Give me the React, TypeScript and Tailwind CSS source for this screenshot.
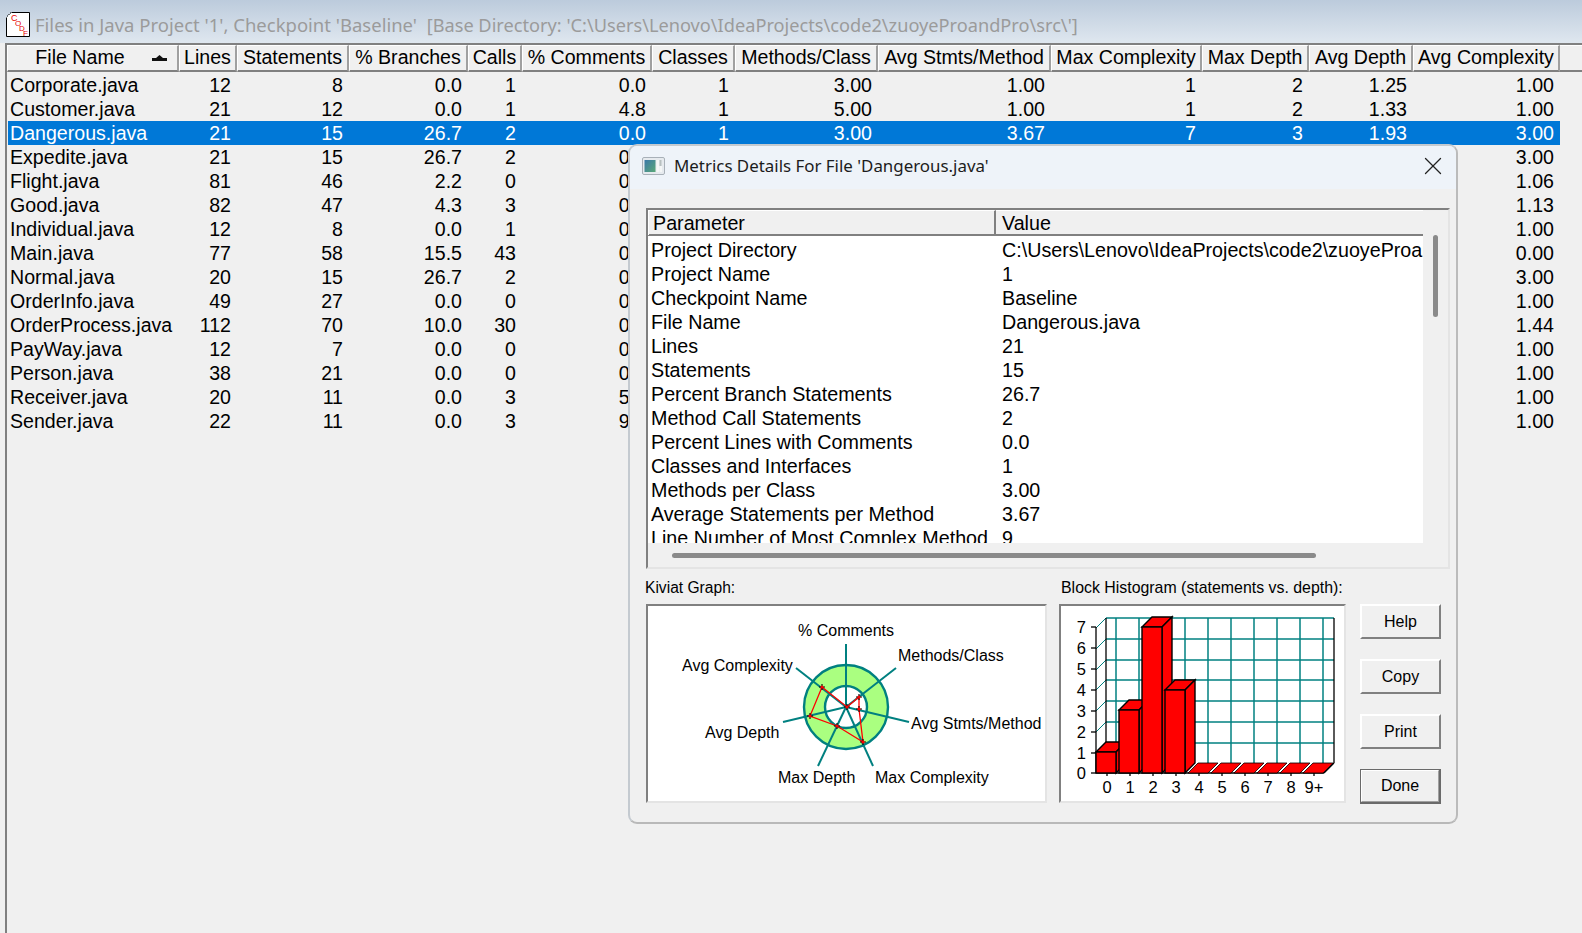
import { X } from "lucide-react";

const columns = [
  "Lines",
  "Statements",
  "% Branches",
  "Calls",
  "% Comments",
  "Classes",
  "Methods/Class",
  "Avg Stmts/Method",
  "Max Complexity",
  "Max Depth",
  "Avg Depth",
  "Avg Complexity",
];

const headerCols =
  "grid grid-cols-[172px_58px_112px_119px_54px_130px_83px_143px_173px_151px_107px_104px_147px]";
const rowCols =
  "grid grid-cols-[171px_58px_112px_119px_54px_130px_83px_143px_173px_151px_107px_104px_147px]";

// cells behind the dialog can't be read in the picture, so they stay empty
const files = [
  ["Corporate.java", "12", "8", "0.0", "1", "0.0", "1", "3.00", "1.00", "1", "2", "1.25", "1.00"],
  ["Customer.java", "21", "12", "0.0", "1", "4.8", "1", "5.00", "1.00", "1", "2", "1.33", "1.00"],
  ["Dangerous.java", "21", "15", "26.7", "2", "0.0", "1", "3.00", "3.67", "7", "3", "1.93", "3.00"],
  ["Expedite.java", "21", "15", "26.7", "2", "0.0", "", "", "", "", "", "", "3.00"],
  ["Flight.java", "81", "46", "2.2", "0", "0.0", "", "", "", "", "", "", "1.06"],
  ["Good.java", "82", "47", "4.3", "3", "0.0", "", "", "", "", "", "", "1.13"],
  ["Individual.java", "12", "8", "0.0", "1", "0.0", "", "", "", "", "", "", "1.00"],
  ["Main.java", "77", "58", "15.5", "43", "0.0", "", "", "", "", "", "", "0.00"],
  ["Normal.java", "20", "15", "26.7", "2", "0.0", "", "", "", "", "", "", "3.00"],
  ["OrderInfo.java", "49", "27", "0.0", "0", "0.0", "", "", "", "", "", "", "1.00"],
  ["OrderProcess.java", "112", "70", "10.0", "30", "0.0", "", "", "", "", "", "", "1.44"],
  ["PayWay.java", "12", "7", "0.0", "0", "0.0", "", "", "", "", "", "", "1.00"],
  ["Person.java", "38", "21", "0.0", "0", "0.0", "", "", "", "", "", "", "1.00"],
  ["Receiver.java", "20", "11", "0.0", "3", "5.0", "", "", "", "", "", "", "1.00"],
  ["Sender.java", "22", "11", "0.0", "3", "9.1", "", "", "", "", "", "", "1.00"],
];

const metrics = [
  ["Project Directory", "C:\\Users\\Lenovo\\IdeaProjects\\code2\\zuoyeProandPro\\src\\"],
  ["Project Name", "1"],
  ["Checkpoint Name", "Baseline"],
  ["File Name", "Dangerous.java"],
  ["Lines", "21"],
  ["Statements", "15"],
  ["Percent Branch Statements", "26.7"],
  ["Method Call Statements", "2"],
  ["Percent Lines with Comments", "0.0"],
  ["Classes and Interfaces", "1"],
  ["Methods per Class", "3.00"],
  ["Average Statements per Method", "3.67"],
  ["Line Number of Most Complex Method", "9"],
];

const headerCell =
  "h-[27px] flex items-center justify-center border-t border-l border-t-white border-l-white border-r-2 border-b-2 border-r-[#a0a0a0] border-b-[#808080] whitespace-nowrap overflow-hidden";

const raised =
  "w-[81px] h-[35px] flex items-center justify-center bg-[#f0f0f0] border-t-2 border-l-2 border-t-white border-l-white border-r-2 border-b-2 border-r-[#808080] border-b-[#808080] text-[16px] text-black";

const sunken =
  "border-t-2 border-l-2 border-t-[#808080] border-l-[#808080] border-r-2 border-b-2 border-r-[#e4e4e4] border-b-[#e4e4e4] bg-white";

const spokes = [
  [846, 644],
  [896, 668],
  [909, 722],
  [873, 766],
  [818, 766],
  [783, 722],
  [796, 668],
];

const kiviatPoints = [
  [847, 707],
  [859, 697],
  [859, 709],
  [863, 742],
  [837, 726],
  [810, 716],
  [822, 687],
];

const kiviatLabels: [string, number, number][] = [
  ["% Comments", 798, 636],
  ["Methods/Class", 898, 661],
  ["Avg Complexity", 682, 671],
  ["Avg Depth", 705, 738],
  ["Avg Stmts/Method", 911, 729],
  ["Max Depth", 778, 783],
  ["Max Complexity", 875, 783],
];

function KiviatGraph() {
  return (
    <svg width="397" height="195" viewBox="648 606 397 195">
      <circle cx="846" cy="707" r="42" fill="#aaff80" stroke="#008080" strokeWidth="2.4" />
      <circle cx="846" cy="707" r="21" fill="#ffffff" stroke="#008080" strokeWidth="2.4" />
      {spokes.map(([x, y]) => (
        <line key={x} x1="846" y1="707" x2={x} y2={y} stroke="#008080" strokeWidth="2" />
      ))}
      <polygon
        points={kiviatPoints.map((p) => p.join(",")).join(" ")}
        fill="none"
        stroke="#ff0000"
        strokeWidth="1.3"
      />
      {kiviatPoints.map(([x, y]) => (
        <g key={x + "-" + y}>
          <path d={`M${x - 3} ${y}h6M${x} ${y - 3}v6`} stroke="#000000" strokeWidth="1.1" />
          <circle cx={x} cy={y} r="1.6" fill="#ff0000" />
        </g>
      ))}
      {kiviatLabels.map(([label, x, y]) => (
        <text key={label} x={x} y={y} fontSize="16" fill="#000000">
          {label}
        </text>
      ))}
    </svg>
  );
}

const gridRows = [618, 639, 660, 680, 701, 722, 743];
const gridVerticals = [1116, 1139, 1162, 1185, 1208, 1231, 1254, 1277, 1300, 1323];
const yTicks = [773, 753, 732, 711, 690, 669, 648, 627];
const xLabels = ["0", "1", "2", "3", "4", "5", "6", "7", "8", "9+"];
const bars = [
  [1096, 752],
  [1119, 710],
  [1142, 627],
  [1165, 690],
];
const flatBars = [1188, 1211, 1234, 1257, 1280, 1303];

function BlockHistogram() {
  return (
    <svg width="283" height="195" viewBox="1061 606 283 195">
      {gridRows.map((y) => (
        <g key={y} stroke="#008080">
          <line x1="1106" y1={y} x2="1334" y2={y} strokeWidth="1.5" />
          <line x1="1106" y1={y} x2="1096" y2={y + 10} strokeWidth="1" />
        </g>
      ))}
      {gridVerticals.map((x) => (
        <line key={x} x1={x} y1="618" x2={x} y2="763" stroke="#008080" strokeWidth="1.5" />
      ))}
      <line x1="1106" y1="618" x2="1106" y2="763" stroke="#000000" strokeWidth="1.3" />
      <line x1="1334" y1="618" x2="1334" y2="763" stroke="#000000" strokeWidth="1.3" />
      <line x1="1334" y1="763" x2="1324" y2="773" stroke="#000000" strokeWidth="1.3" />
      <line x1="1096" y1="627" x2="1096" y2="773" stroke="#000000" strokeWidth="1.3" />
      <line x1="1096" y1="773" x2="1324" y2="773" stroke="#000000" strokeWidth="1.3" />
      {flatBars.map((x) => (
        <polygon
          key={x}
          points={`${x},773 ${x + 20},773 ${x + 30},763 ${x + 10},763`}
          fill="#ff0000"
          stroke="#000000"
          strokeWidth="0.8"
        />
      ))}
      {bars.map(([x, top]) => (
        <g key={x} fill="#ff0000" stroke="#000000" strokeWidth="1.4">
          <polygon points={`${x},${top} ${x + 10},${top - 10} ${x + 30},${top - 10} ${x + 20},${top}`} />
          <polygon points={`${x + 20},${top} ${x + 30},${top - 10} ${x + 30},763 ${x + 20},773`} />
          <rect x={x} y={top} width="20" height={773 - top} />
        </g>
      ))}
      {yTicks.map((y, i) => (
        <g key={y}>
          <line x1="1091" y1={y} x2="1096" y2={y} stroke="#000000" strokeWidth="1.3" />
          <text x="1086" y={y + 6} fontSize="16.5" textAnchor="end" fill="#000000">
            {i}
          </text>
        </g>
      ))}
      {xLabels.map((label, i) => (
        <g key={label}>
          <line x1={1107 + i * 23} y1="773" x2={1107 + i * 23} y2="776" stroke="#000000" strokeWidth="1.3" />
          <text x={1107 + i * 23} y="793" fontSize="16.5" textAnchor="middle" fill="#000000">
            {label}
          </text>
        </g>
      ))}
    </svg>
  );
}

function AppIcon() {
  return (
    <svg width="24" height="25" viewBox="0 0 24 25" className="shrink-0">
      <path d="M5.5 .5H23.5V24.5H.5V5.5" fill="#ffffff" stroke="#000000" />
      <path d="M1 4h1M2.500 2.500h1M4 1h1" stroke="#000000" />
      <text x="5" y="9" fontSize="9" fill="#e80000">C</text>
      <text x="9" y="14" fontSize="8" fill="#e80000">O</text>
      <text x="13" y="19" fontSize="8" fill="#e80000">D</text>
      <text x="17" y="24" fontSize="8" fill="#e80000">F</text>
    </svg>
  );
}

function WindowIcon() {
  return (
    <svg width="23" height="18" viewBox="0 0 23 18" className="shrink-0">
      <defs>
        <linearGradient id="win" x1="0" y1="0" x2="1" y2="1">
          <stop offset="0" stopColor="#3a78a8" />
          <stop offset="1" stopColor="#5aa878" />
        </linearGradient>
      </defs>
      <rect x=".5" y=".5" width="22" height="17" rx="1.500" fill="#e6eaee" stroke="#a8b0b8" />
      <rect x="2.500" y="3" width="11" height="12" fill="url(#win)" />
      <rect x="14.500" y="3" width="2.500" height="12" fill="#f4f6f6" />
      <rect x="17.500" y="3" width="2" height="6" fill="#b8c0c0" />
      <rect x="17.500" y="9" width="2.500" height="6" fill="#f4f6f6" />
    </svg>
  );
}

function MetricsDialog() {
  return (
    <div className="absolute left-[628px] top-[144px] w-[830px] h-[680px] flex flex-col rounded-[9px] border-2 border-[#c4cad0] border-r-[#bbbbbb] border-b-[#b9b9b9] bg-[#f0f0f0] overflow-hidden">
      <div className="h-[43px] shrink-0 flex items-center pl-[12px] pr-[8px] pb-[3px] bg-[#eef3f9]">
        <WindowIcon />
        <span className="ml-[9px] font-['Noto_Sans',sans-serif] text-[16.9px] text-[#1c1c1c] flex-1 whitespace-nowrap">
          Metrics Details For File 'Dangerous.java'
        </span>
        <X size={30} strokeWidth={1} className="text-[#222222]" />
      </div>

      <div className="flex-1 flex flex-col pl-[16px] pt-[19px]">
        <div className="w-[804px] h-[361px] flex flex-col border-t-2 border-l-2 border-t-[#808080] border-l-[#808080] border-r-2 border-b-2 border-r-[#e4e4e4] border-b-[#e4e4e4]">
          <div className="flex h-[333px]">
            <div className="w-[775px] flex flex-col text-[19.7px]">
              <div className="grid grid-cols-[348px_427px] h-[26px] shrink-0 border-b-2 border-b-[#808080]">
                <div className="pl-[4px] border-t border-l border-white border-r-2 border-r-[#808080] leading-[24px]">Parameter</div>
                <div className="pl-[6px] border-t border-white leading-[24px]">Value</div>
              </div>
              <div className="h-[307px] bg-white overflow-hidden pt-[2px]">
                {metrics.map(([name, value]) => (
                  <div key={name} className="grid grid-cols-[348px_427px] h-[24px] leading-[24px] whitespace-nowrap">
                    <div className="pl-[3px] overflow-hidden">{name}</div>
                    <div className="pl-[6px] overflow-hidden">{value}</div>
                  </div>
                ))}
              </div>
            </div>
            <div className="flex-1 flex justify-center pt-[25px]">
              <div className="w-[5px] h-[82px] rounded-full bg-[#8a8a8a]" />
            </div>
          </div>
          <div className="pl-[24px] pt-[10px]">
            <div className="w-[644px] h-[5px] rounded-full bg-[#8a8a8a]" />
          </div>
        </div>

        <div className="flex mt-[10px]">
          <div className="flex flex-col w-[401px]">
            <div className="h-[25px] text-[15.6px] leading-[17px] -ml-[1px] whitespace-nowrap">Kiviat Graph:</div>
            <div className={sunken + " h-[199px]"}>
              <KiviatGraph />
            </div>
          </div>
          <div className="flex flex-col w-[287px] ml-[12px]">
            <div className="h-[25px] text-[15.9px] leading-[17px] pl-[2px] whitespace-nowrap">
              Block Histogram (statements vs. depth):
            </div>
            <div className={sunken + " h-[199px]"}>
              <BlockHistogram />
            </div>
          </div>
          <div className="flex flex-col gap-[20px] ml-[14px] pt-[25px]">
            <div className={raised}>Help</div>
            <div className={raised}>Copy</div>
            <div className={raised}>Print</div>
            <div className="w-[81px] h-[35px] border border-[#6a6a6a] border-r-2 border-b-2">
              <div className="h-full flex items-center justify-center bg-[#f0f0f0] border-t border-l border-white border-r border-b border-r-[#a0a0a0] border-b-[#a0a0a0] text-[16px] text-black">
                Done
              </div>
            </div>
          </div>
        </div>
      </div>
    </div>
  );
}

export default function App() {
  return (
    <div className="relative w-[1582px] h-[933px] overflow-hidden flex flex-col bg-[#f0f0f0] font-['Liberation_Sans',Arial,sans-serif] text-black">
      <div className="h-[43px] shrink-0 flex items-end pl-[6px] pb-[6px] bg-gradient-to-b from-[#bccbdc] to-[#dfe7ef]">
        <AppIcon />
        <span className="ml-[5px] font-['Noto_Sans',sans-serif] text-[18.5px] leading-[24px] text-[#9b9b9b] whitespace-pre">
          {"Files in Java Project '1', Checkpoint 'Baseline'  "}
          <span className="text-[18.2px]">
            {"[Base Directory: 'C:\\Users\\Lenovo\\IdeaProjects\\code2\\zuoyeProandPro\\src\\']"}
          </span>
        </span>
      </div>

      <div className="ml-[5px] flex-1 border-l-2 border-t-2 border-[#808080] text-[19.6px]">
        <div className="flex">
          <div className={headerCols + " w-fit"}>
            <div className={headerCell + " relative pr-[25px]"}>
              File Name
              <svg width="15" height="7" viewBox="0 0 15 7" className="absolute left-[144px] top-[9px]">
                <path d="M4 3 7.500 0 11 3H15V6H0V3Z" fill="#111111" />
              </svg>
            </div>
            {columns.map((name) => (
              <div key={name} className={headerCell}>
                {name}
              </div>
            ))}
          </div>
          <div className="flex-1 h-[27px] border-b-2 border-b-[#808080] border-t border-t-white" />
        </div>
        <div className="pt-[1px] pl-[1px]">
          {files.map((row) => (
            <div
              key={row[0]}
              className={
                rowCols +
                " w-fit h-[24px] leading-[24px] " +
                (row[0] === "Dangerous.java" ? "bg-[#0078d7] text-white" : "")
              }
            >
              {row.map((cell, i) => (
                <div key={i} className={i === 0 ? "pl-[2px] whitespace-nowrap" : "text-right pr-[6px]"}>
                  {cell}
                </div>
              ))}
            </div>
          ))}
        </div>
      </div>

      <MetricsDialog />
    </div>
  );
}
